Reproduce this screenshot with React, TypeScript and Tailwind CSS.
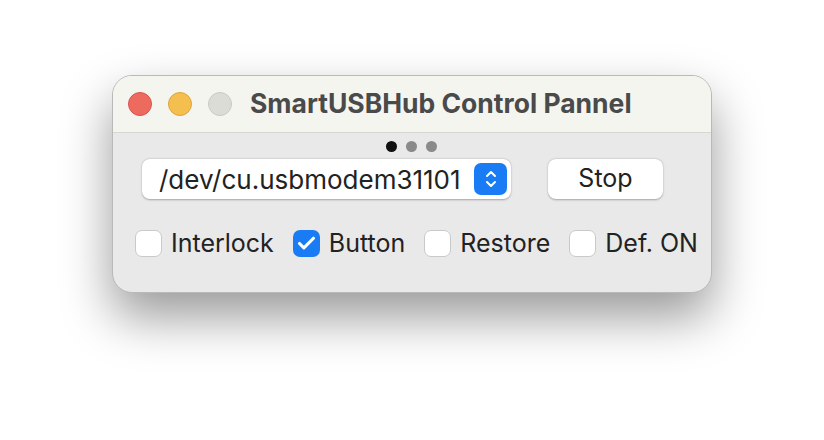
import { Check, ChevronUp, ChevronDown } from 'lucide-react';

const options = [
  { label: 'Interlock', checked: false },
  { label: 'Button', checked: true },
  { label: 'Restore', checked: false },
  { label: 'Def. ON', checked: false },
];

function Box({ checked }: { checked: boolean }) {
  if (checked) {
    return (
      <span className="flex h-[27px] w-[27px] items-center justify-center rounded-[7px] bg-[#1a7cf5]">
        <Check size={21} strokeWidth={3.6} color="white" />
      </span>
    );
  }
  return <span className="h-[27px] w-[27px] rounded-[7px] border border-[#c9c9c9] bg-white" />;
}

export default function App() {
  return (
    <div
      className="h-[440px] w-[824px] bg-white pl-[112px] pt-[75px]"
      style={{ fontFamily: 'Inter, "Noto Sans", sans-serif' }}
    >
      <div className="w-[600px] overflow-hidden rounded-[20px] border border-[#b9b9b9] bg-[#e9e9e9] shadow-[0_24px_50px_rgba(0,0,0,0.4)]">
        {/* title bar */}
        <div className="flex h-[57px] items-center border-b border-[#d6d6d2] bg-[#f5f5f0] pl-[15px]">
          <div className="flex gap-[16px]">
            <span className="h-[24px] w-[24px] rounded-full border border-[#d9534d] bg-[#ed6a5e]" />
            <span className="h-[24px] w-[24px] rounded-full border border-[#dba53a] bg-[#f5bf4f]" />
            <span className="h-[24px] w-[24px] rounded-full border border-[#c9c9c4] bg-[#dcdcd7]" />
          </div>
          <div className="ml-[18px] text-[26.5px] font-bold text-[#4a4a4a]">
            SmartUSBHub Control Pannel
          </div>
        </div>

        {/* body */}
        <div className="h-[159px]">
          <div className="flex justify-center gap-[9px] pr-[1px] pt-[8px]">
            <span className="h-[11px] w-[11px] rounded-full bg-[#111]" />
            <span className="h-[11px] w-[11px] rounded-full bg-[#8a8a8a]" />
            <span className="h-[11px] w-[11px] rounded-full bg-[#8a8a8a]" />
          </div>

          <div className="mt-[7px] flex items-center pl-[29px]">
            <div className="flex h-[40px] w-[369px] items-center justify-between rounded-[8px] bg-white pl-[17px] pr-[4px] shadow-[0_0.5px_2px_rgba(0,0,0,0.3)]">
              <span className="text-[26px] text-[#222]">/dev/cu.usbmodem31101</span>
              <span className="flex h-[32px] w-[33px] flex-col items-center justify-center rounded-[7px] bg-[#1a7cf5]">
                <ChevronUp size={16} strokeWidth={3} color="white" className="-mb-[3px]" />
                <ChevronDown size={16} strokeWidth={3} color="white" className="-mt-[3px]" />
              </span>
            </div>
            <div className="ml-[37px] flex h-[40px] w-[115px] items-center justify-center rounded-[8px] bg-white text-[25px] text-[#222] shadow-[0_0.5px_2px_rgba(0,0,0,0.3)]">
              Stop
            </div>
          </div>

          <div className="mt-[26px] flex items-center pl-[22px]">
            {options.map((o, i) => (
              <div key={o.label} className={`flex items-center gap-[9px] ${i > 0 ? 'ml-[19px]' : ''}`}>
                <Box checked={o.checked} />
                <span className="text-[25px] text-[#222]">{o.label}</span>
              </div>
            ))}
          </div>
        </div>
      </div>
    </div>
  );
}
